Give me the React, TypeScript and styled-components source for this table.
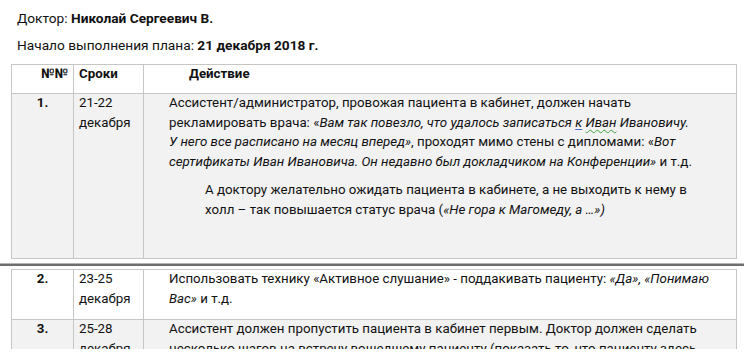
import React from "react";
import styled, { createGlobalStyle } from "styled-components";

const GlobalStyle = createGlobalStyle`
  html, body {
    margin: 0;
    padding: 0;
    background: #ffffff;
  }
  body {
    font-family: Roboto, "Noto Sans", "Liberation Sans", sans-serif;
    font-size: 13.3px;
    color: #111;
  }
`;

const Page = styled.div`
  width: 744px;
  height: 360px;
  overflow: hidden;
  background: #fff;
`;

const Meta = styled.div`
  padding: 9px 0 0 17px;
  line-height: 19px;
  font-size: 13.7px;
`;

const MetaLine = styled.div`
  margin-bottom: 8px;
  white-space: nowrap;
  &:last-child {
    margin-bottom: 9px;
  }
`;

const Table = styled.table`
  margin-left: 11px;
  width: 726px;
  border-collapse: collapse;
  table-layout: fixed;
  line-height: 19.5px;
`;

const Row = styled.tr<{ $shaded?: boolean; $h: number }>`
  height: ${(p) => p.$h}px;
  background: ${(p) => (p.$shaded ? "#f2f2f2" : "#fff")};
`;

const Cell = styled.td<{ $align?: string }>`
  border: 1px solid #c6c6c6;
  vertical-align: top;
  padding: 0 5px;
  text-align: ${(p) => p.$align || "left"};
  & > * {
    margin-top: -1px;
  }
`;

const HeadCell = styled(Cell)<{ $indent?: number }>`
  font-weight: 700;
  padding-top: 0;
  padding-left: ${(p) => p.$indent ?? 5}px;
`;

const Num = styled(Cell)`
  font-weight: 700;
  text-align: center;
`;

const Para = styled.div<{ $indent?: number; $gap?: number }>`
  padding-left: ${(p) => p.$indent ?? 20}px;
  && {
    margin-top: ${(p) => p.$gap ?? -1}px;
  }
`;

const Line = styled.span`
  display: block;
  white-space: nowrap;
`;

const Label = styled.div`
  white-space: nowrap;
`;

const I = styled.i`
  font-style: italic;
`;

const Wavy = styled.span`
  text-decoration: underline wavy #3aa53a;
  text-decoration-thickness: 1px;
  text-underline-offset: 2px;
`;

const Thin = styled.span`
  text-decoration: underline #4a6fd0;
  text-underline-offset: 2px;
`;

const PageBreak = styled.div`
  height: 10px;
  display: flex;
  align-items: center;
  &::before {
    content: "";
    flex: 1;
    height: 2px;
    background: #6e6e6e;
    border-top: 1px solid #b5b5b5;
  }
`;

const SecondPage = styled.div`
  height: 80px;
  overflow: hidden;
`;

export default function App() {
  return (
    <Page>
      <GlobalStyle />
      <Meta>
        <MetaLine>
          Доктор: <b>Николай Сергеевич В.</b>
        </MetaLine>
        <MetaLine>
          Начало выполнения плана: <b>21 декабря 2018 г.</b>
        </MetaLine>
      </Meta>
      <Table>
        <colgroup>
          <col style={{ width: 62 }} />
          <col style={{ width: 70 }} />
          <col />
        </colgroup>
        <tbody>
          <Row $h={29}>
            <HeadCell $align="right">
              <Label>№№</Label>
            </HeadCell>
            <HeadCell>
              <Label>Сроки</Label>
            </HeadCell>
            <HeadCell $indent={45}>
              <Label>Действие</Label>
            </HeadCell>
          </Row>
          <Row $shaded $h={165}>
            <Num>
              <Label>1.</Label>
            </Num>
            <Cell>
              <Label>
                <Line>21-22</Line>
                <Line>декабря</Line>
              </Label>
            </Cell>
            <Cell>
              <Para>
                <Line>Ассистент/администратор, провожая пациента в кабинет, должен начать</Line>
                <Line>
                  рекламировать врача: «
                  <I>
                    Вам так повезло, что удалось записаться <Thin>к</Thin> <Wavy>Иван</Wavy> Ивановичу.
                  </I>
                </Line>
                <Line>
                  <I>У него все расписано на месяц вперед»</I>, проходят мимо стены с дипломами: «<I>Вот</I>
                </Line>
                <Line>
                  <I>сертификаты Иван Ивановича. Он недавно был докладчиком на Конференции»</I> и т.д.
                </Line>
              </Para>
              <Para $indent={56} $gap={9}>
                <Line>А доктору желательно ожидать пациента в кабинете, а не выходить к нему в</Line>
                <Line>
                  холл – так повышается статус врача (<I>«Не гора к Магомеду, а …»)</I>
                </Line>
              </Para>
            </Cell>
          </Row>
        </tbody>
      </Table>
      <PageBreak />
      <SecondPage>
        <Table>
          <colgroup>
            <col style={{ width: 62 }} />
            <col style={{ width: 70 }} />
            <col />
          </colgroup>
          <tbody>
            <Row $h={50}>
              <Num>
                <Label>2.</Label>
              </Num>
              <Cell>
                <Label>
                  <Line>23-25</Line>
                  <Line>декабря</Line>
                </Label>
              </Cell>
              <Cell>
                <Para>
                  <Line>
                    Использовать технику «Активное слушание» - поддакивать пациенту: <I>«Да», «Понимаю</I>
                  </Line>
                  <Line>
                    <I>Вас»</I> и т.д.
                  </Line>
                </Para>
              </Cell>
            </Row>
            <Row $shaded $h={60}>
              <Num>
                <Label>3.</Label>
              </Num>
              <Cell>
                <Label>
                  <Line>25-28</Line>
                  <Line>декабря</Line>
                </Label>
              </Cell>
              <Cell>
                <Para>
                  <Line>Ассистент должен пропустить пациента в кабинет первым. Доктор должен сделать</Line>
                  <Line>несколько шагов на встречу вошедшему пациенту (показать то, что пациенту здесь</Line>
                </Para>
              </Cell>
            </Row>
          </tbody>
        </Table>
      </SecondPage>
    </Page>
  );
}
